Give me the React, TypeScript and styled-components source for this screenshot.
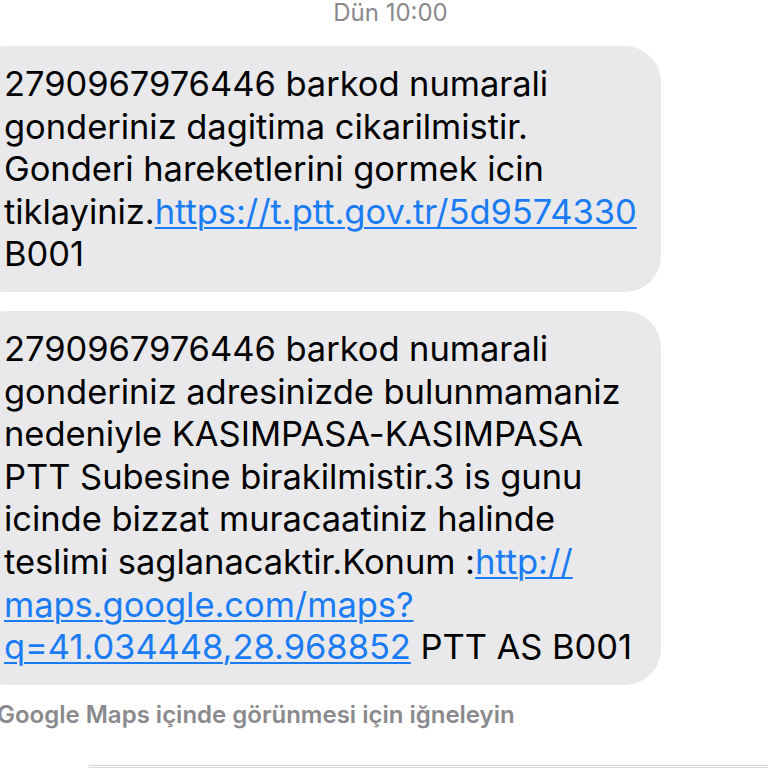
import React from "react";
import styled, { createGlobalStyle } from "styled-components";

const GlobalStyle = createGlobalStyle`
  html, body {
    margin: 0;
    padding: 0;
    background: #ffffff;
    overflow: hidden;
  }
  body {
    font-family: Inter, "Noto Sans", "Liberation Sans", sans-serif;
  }
`;

const Screen = styled.div`
  width: 768px;
  height: 768px;
  display: flex;
  flex-direction: column;
  overflow: hidden;
  background: #ffffff;
`;

const Timestamp = styled.div`
  padding-left: 13px;
  text-align: center;
  font-size: 24px;
  line-height: 25px;
  color: #8a8a8e;
  font-weight: 400;
`;

const Thread = styled.div`
  display: flex;
  flex-direction: column;
  gap: 19px;
  margin-top: 21px;
`;

const Bubble = styled.div`
  margin-left: -30px;
  width: 691px;
  box-sizing: border-box;
  background: #e9e9eb;
  border-radius: 36px;
  padding: 17px 14px 16px 34px;
  font-size: 34.5px;
  line-height: 42.6px;
  color: #000000;
  letter-spacing: -0.05px;
`;

const Link = styled.span`
  color: #1a7cf5;
  text-decoration: underline;
  text-decoration-thickness: 2px;
  text-underline-offset: 3px;
`;

const Hint = styled.div`
  margin-top: 17px;
  margin-left: -3px;
  font-size: 24px;
  line-height: 26px;
  font-weight: 600;
  letter-spacing: 0px;
  color: #8a8a8e;
`;

const Composer = styled.div`
  margin-top: 37px;
  margin-left: 88px;
  margin-right: -40px;
  height: 60px;
  border: 1px solid #d6d6da;
  border-radius: 30px;
  box-shadow: 0 -1px 2px rgba(0, 0, 0, 0.04);
`;

export default function App() {
  return (
    <>
      <GlobalStyle />
      <Screen>
        <Timestamp>Dün 10:00</Timestamp>
        <Thread>
          <Bubble>
            2790967976446 barkod numarali
            <br />
            gonderiniz dagitima cikarilmistir.
            <br />
            Gonderi hareketlerini gormek icin
            <br />
            tiklayiniz.<Link>https://t.ptt.gov.tr/5d9574330</Link>
            <br />
            B001
          </Bubble>
          <Bubble>
            2790967976446 barkod numarali
            <br />
            gonderiniz adresinizde bulunmamaniz
            <br />
            nedeniyle KASIMPASA-KASIMPASA
            <br />
            PTT Subesine birakilmistir.3 is gunu
            <br />
            icinde bizzat muracaatiniz halinde
            <br />
            teslimi saglanacaktir.Konum :<Link>http://</Link>
            <br />
            <Link>maps.google.com/maps?</Link>
            <br />
            <Link>q=41.034448,28.968852</Link> PTT AS B001
          </Bubble>
        </Thread>
        <Hint>Google Maps içinde görünmesi için iğneleyin</Hint>
        <Composer />
      </Screen>
    </>
  );
}
